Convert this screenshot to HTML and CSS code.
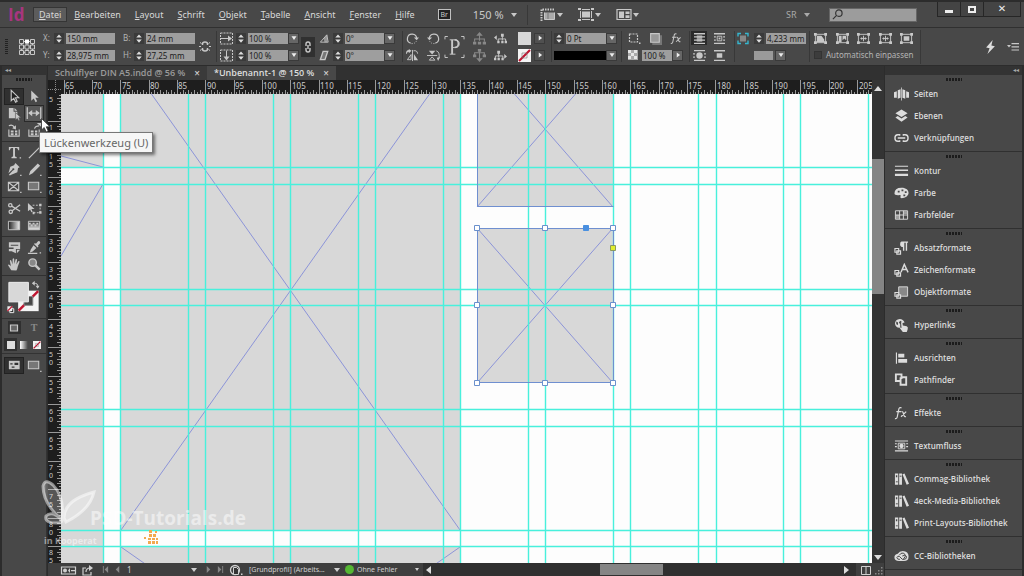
FILE: index.html
```html
<!DOCTYPE html>
<html lang="de">
<head>
<meta charset="utf-8">
<title>Unbenannt-1</title>
<link rel="stylesheet" href="styles.css">
</head>
<body>
<svg class="defs" aria-hidden="true">
  <symbol id="spin" viewBox="0 0 10 12"><path d="M2 5 5 1.5 8 5zM2 7h6L5 10.500z"/></symbol>
  <symbol id="caret" viewBox="0 0 10 12"><path d="M2 4h6L5 8.500z"/></symbol>
  <symbol id="right" viewBox="0 0 10 12"><path d="M3.500 3v6L7.500 6z"/></symbol>
  <symbol id="refpoint" viewBox="0 0 16 16"><g fill="none" stroke="currentColor"><path d="M2.500 2.500h11v11h-11zM2.500 8h11M8 2.500v11"/></g><g fill="#484848" stroke="currentColor"><path d="M.5.5h4v4h-4zM11.500.5h4v4h-4zM.5 6h4v4h-4zM6 6h4v4H6zM11.500 6h4v4h-4zM.5 11.500h4v4h-4zM6 11.500h4v4H6zM11.500 11.500h4v4h-4z"/></g><path d="M6 .5h4v4H6z" fill="#fff"/></symbol>
  <symbol id="unlink" viewBox="0 0 12 14"><g fill="none" stroke="currentColor" stroke-width="1.500"><path d="M3.500 5.500V4.500q0-2 2.500-2t2.500 2v1M3.500 8.500v1q0 2 2.500 2t2.500-2v-1"/><path stroke-width="1" d="M0 7h2M10 7h2M1 3l1.500 1M11 3 9.500 4M1 11l1.500-1M11 11l-1.500-1"/></g></symbol>
  <symbol id="link" viewBox="0 0 10 14"><g fill="none" stroke="currentColor" stroke-width="1.400"><path d="M3 6V4q0-2 2-2t2 2v2M3 8v2q0 2 2 2t2-2V8M5 5v4"/></g></symbol>
  <symbol id="scalex" viewBox="0 0 13 12"><path fill="none" stroke="currentColor" stroke-dasharray="2 1" d="M.5.5h12v11H.5z"/><path d="M1 5.500h7V3l4 3-4 3V6.500H1z"/></symbol>
  <symbol id="scaley" viewBox="0 0 13 12"><path fill="none" stroke="currentColor" stroke-dasharray="2 1" d="M.5.5h12v11H.5z"/><path d="M6 1h1v6h2.500l-3 4-3-4H6z"/></symbol>
  <symbol id="angle" viewBox="0 0 12 12"><path fill="none" stroke="currentColor" d="M10 10H1.500L8.500 2z"/><path d="M5 6l4-4v8H6z" opacity=".6"/></symbol>
  <symbol id="shear" viewBox="0 0 12 12"><path fill="#777" stroke="currentColor" stroke-width="1.500" d="M4.500 1.500h5l-3 9h-5z"/></symbol>
  <symbol id="rotcw" viewBox="0 0 14 14"><path fill="none" stroke="currentColor" stroke-width="1.300" d="M5 12A5 5 0 1 1 11.500 7"/><path fill="none" stroke="currentColor" stroke-dasharray="1 1.500" d="M6 12.500q5 0 5.500-4"/><path d="M8.500 6h5.500L11.500 9z"/></symbol>
  <symbol id="rotccw" viewBox="0 0 14 14"><path fill="none" stroke="currentColor" stroke-width="1.300" d="M9 12A5 5 0 1 0 2.500 7"/><path fill="none" stroke="currentColor" stroke-dasharray="1 1.500" d="M8 12.500q-5 0-5.500-4"/><path d="M0 6h5.500L2.500 9z"/></symbol>
  <symbol id="fliph" viewBox="0 0 14 14"><path d="M8.500 5.500 13 12H8.500zM3 0l3 2-3 2.500V3Q1 3 1 5H0q0-4 3-4z"/><path fill="none" stroke="currentColor" d="M5.500 6v5.500h-4zM7 1v12M8 2q4-1 4.500 3"/></symbol>
  <symbol id="flipv" viewBox="0 0 14 14"><path d="M2 2h7L5.500 6z"/><path fill="none" stroke="currentColor" d="M2.500 12h6L5.500 8.500zM0 7h11M10 2q4 1 3 8"/><path d="M14 9l-2 4-1.500-3.500z"/></symbol>
  <symbol id="bigp" viewBox="0 0 22 24"><path fill="none" stroke="currentColor" d="M1 4V1h3M18 1h3v3M1 20v3h3M18 23h3v-3"/><path fill="none" stroke="currentColor" stroke-width="1" d="M6 4.500h5q5 0 5 4t-5 4H9M6 19.500h6"/><path d="M7.500 4.500h2v15h-2z"/><path fill="none" stroke="currentColor" stroke-width="1.600" d="M11 4.500q4 0 4 4t-4 4"/></symbol>
  <symbol id="treeup" viewBox="0 0 12 12"><path fill="none" stroke="currentColor" d="M6 3v5M1.500 9V6.500h9V9"/><path d="M6 0l3 3.500H3zM0 9h3v2.500H0zM4.500 9h3v2.500h-3zM9 9h3v2.500H9z"/></symbol>
  <symbol id="treedown" viewBox="0 0 12 12"><path fill="none" stroke="currentColor" d="M6 2v7M1.500 5.500V3.500h9v2"/><path d="M6 12l3-3.500H3zM0 5h3v2.500H0zM9 5h3v2.500H9zM4.500 0h3v2.500h-3z"/></symbol>
  <symbol id="treeleft" viewBox="0 0 14 12"><path fill="none" stroke="currentColor" d="M9 3v5M4.500 9V6.500h8V9"/><path d="M0 5l3-2.500v5zM7.500 1h3v3h-3zM3.500 8.500h2.500V11H3.500zM7.800 8.500h2.500V11H7.800zM11.500 8.500H14V11h-2.500z"/></symbol>
  <symbol id="treeright" viewBox="0 0 14 12"><path fill="none" stroke="currentColor" d="M5 3v5M1.500 9V6.500h8V9"/><path d="M14 7l-3-2.500v5zM3.500 1h3v3h-3zM0 8.500h2.500V11H0zM3.800 8.500h2.500V11H3.800zM8 8.500h2.500V11H8z"/></symbol>
  <symbol id="none" viewBox="0 0 13 13"><path fill="#f4f4f4" d="M0 0h13v13H0z"/><path stroke="#c01530" stroke-width="2.200" d="M1 12 12 1"/><path d="M4 4h5v5H4z" fill="none" stroke="#777" stroke-width=".6"/></symbol>
  <symbol id="dashbox" viewBox="0 0 13 12"><path fill="none" stroke="currentColor" stroke-width="1.200" stroke-dasharray="2 1" d="M1.500 1.500h8v8h-8z"/><path d="M11 10h1.500v1.500H11z"/></symbol>
  <symbol id="shadowbox" viewBox="0 0 12 12"><path d="M3 3h9v9H3z" fill="#777"/><path fill="#999" stroke="currentColor" d="M1.500 1.500h8v8h-8z"/></symbol>
  <symbol id="fx" viewBox="0 0 16 14"><g fill="none" stroke="currentColor" stroke-width="1.300"><path d="M8 1.500q-2.500-1-3 2L3.500 11Q3 13.500 1 13M2.500 5.500h5M8 5.500q1.500-.5 2 2l.7 2q.5 2 2 1.200M13 5.500 7.500 11"/></g></symbol>
  <symbol id="checker" viewBox="0 0 10 10"><path fill="#aaa" d="M0 0h10v10H0z"/><path fill="#e6e6e6" d="M0 0h3v3H0zM6 0h3v3H6zM3 3h3v3H3zM0 6h3v3H0zM6 6h3v3H6z"/></symbol>
  <symbol id="wrapno" viewBox="0 0 14 12"><path d="M1 0h12v1.500H1zM1 3.500h12V5H1zM1 7h12v1.500H1zM1 10.500h12V12H1z"/><path d="M4 2.500h6v7H4z" opacity=".7"/></symbol>
  <symbol id="wrapbox" viewBox="0 0 14 12"><path d="M1 0h12v1.500H1zM1 3.500h2V5H1zM11 3.500h2V5h-2zM1 7h2v1.500H1zM11 7h2v1.500h-2zM1 10.500h12V12H1z"/><path fill="none" stroke="currentColor" d="M4.500 3.500h5v5h-5z"/><path d="M6 5h2v2H6z"/></symbol>
  <symbol id="wrapshape" viewBox="0 0 14 12"><path d="M1 0h12v1.300H1zM0 3.500h2V5H0zM12 3.500h2V5h-2zM0 7h2v1.500H0zM12 7h2v1.500h-2zM1 10.700h12V12H1z"/><circle cx="7" cy="6" r="3.500"/></symbol>
  <symbol id="wrapjump" viewBox="0 0 14 12"><path d="M1 0h12v1.500H1zM1 10.500h12V12H1zM4 3.500h6v5H4z"/></symbol>
  <symbol id="corner" viewBox="0 0 12 12"><path fill="#888" d="M3 3h6v6H3z"/><g fill="none" stroke="#35b6cf" stroke-width="1.400"><path d="M1 4V1h3M8 1h3v3M1 8v3h3M8 11h3V8"/></g></symbol>
  <symbol id="fit" viewBox="0 0 14 12"><path fill="none" stroke="currentColor" d="M1.500 1.500h11v9h-11z"/><path d="M0 0h3v3H0zM11 0h3v3h-3zM0 9h3v3H0zM11 9h3v3h-3zM4 3.500h6v5H4z"/></symbol>
  <symbol id="fitarrow" viewBox="0 0 14 12"><path fill="none" stroke="currentColor" d="M1.500 1.500h11v9h-11zM7 3v6M4 6h6"/><path d="M0 0h3v3H0zM11 0h3v3h-3zM0 9h3v3H0zM11 9h3v3h-3zM3.500 6l2-1.500v3zM10.500 6l-2-1.500v3z"/></symbol>
  <symbol id="fill" viewBox="0 0 14 12"><path fill="none" stroke="currentColor" d="M1.500 1.500h11v9h-11z"/><path d="M0 0h3v3H0zM11 0h3v3h-3zM0 9h3v3H0zM11 9h3v3h-3zM3 3h5l3 4v3H3z"/></symbol>
  <symbol id="fillframe" viewBox="0 0 14 12"><path fill="none" stroke="currentColor" d="M1.500 1.500h11v9h-11z"/><path d="M0 0h3v3H0zM11 0h3v3h-3zM0 9h3v3H0zM11 9h3v3h-3zM3 3h3v7H3zM7 3h4v5L9 6 7 8z"/></symbol>
  <symbol id="bolt" viewBox="0 0 12 16"><path d="M8.500 0 1 8.500l4 .8L2.500 16 11 7l-4-.8z"/></symbol>
  <symbol id="flyout" viewBox="0 0 12 10"><path d="M0 3h4L2 5.500zM4.500 1H12v1.200H4.500zM4.500 4.200H12v1.200H4.500zM4.500 7.400H12v1.200H4.500z"/></symbol>
  <symbol id="viewopt" viewBox="0 0 16 13"><path fill="none" stroke="currentColor" stroke-dasharray="1.500 1" stroke-width="2" d="M1.500 13V1.500H15"/><path fill="#aaa" stroke="currentColor" d="M4.500 4.500h10v7h-10z"/><path fill="none" stroke="#777" d="M4.500 4.500h10M8 5v6"/></symbol>
  <symbol id="screen" viewBox="0 0 16 13"><path d="M4 3.500h8v6H4z"/><path fill="none" stroke="currentColor" d="M2.500 3v7M13.500 3v7M4 1.500h8M4 11.500h8"/><path d="M0 0h3v2H0zM13 0h3v2h-3zM0 11h3v2H0zM13 11h3v2h-3z"/></symbol>
  <symbol id="arrange" viewBox="0 0 16 13"><path fill="none" stroke="currentColor" stroke-width="1.200" d="M1 1.500h14v10H1z"/><path d="M3 3.500h5v6.500H3zM9.500 3.500h4v2.600h-4zM9.500 7.300h4V10h-4z"/></symbol>
  <symbol id="lens" viewBox="0 0 12 12"><g fill="none" stroke="#333" stroke-width="1.300"><circle cx="7.500" cy="4.500" r="3.500"/><path d="M5 7 1 11"/></g></symbol>

  <symbol id="t-select" viewBox="0 0 16 16"><path fill="#222" stroke="currentColor" stroke-width="1.200" d="M4.500 1.500v11l2.700-2.500 2 4 1.600-.9-1.900-3.800h3.600z"/></symbol>
  <symbol id="t-direct" viewBox="0 0 16 16"><path d="M4.500 1.500v11l2.700-2.500 2 4 1.600-.9-1.900-3.800h3.600z"/></symbol>
  <symbol id="t-page" viewBox="0 0 16 16"><path d="M2 2h5v4h4v7H2zM8 2l3 3H8z"/><path stroke="#484848" stroke-width=".6" d="M9 7v8l2-1.800 1.500 2.500 1.200-.8-1.200-2.500H15z"/></symbol>
  <symbol id="t-gap" viewBox="0 0 20 16"><path fill="none" stroke="currentColor" stroke-width="1.400" d="M2.500 1v13M17.500 1v13M5 7.500h10"/><path d="M3.500 7.500 8 4v7zM16.500 7.500 12 4v7z"/></symbol>
  <symbol id="t-collect" viewBox="0 0 16 16"><path fill="none" stroke="currentColor" stroke-width="1.200" d="M2 7v7h11V7M2 3q4-2 6 2"/><path d="M9.500 2.500V7L5.500 5.500zM4 8h3v2H4zM8.500 8H11v2H8.500zM4 11h3v2H4zM8.500 11H11v2H8.500z"/></symbol>
  <symbol id="t-place" viewBox="0 0 16 16"><path fill="none" stroke="currentColor" stroke-width="1.200" d="M2 7v7h11V7M8 6q1-3 5-3"/><path d="M10.500 0H15v4zM4 8h3v2H4zM8.500 8H11v2H8.500zM4 11h3v2H4zM8.500 11H11v2H8.500z"/></symbol>
  <symbol id="t-type" viewBox="0 0 16 16"><path d="M2 2h11v3.500h-1Q11.500 3.500 10 3.300H8.500v8.400q0 1 1.800 1V14H4.800v-1.300q1.700 0 1.700-1V3.300H5Q3.500 3.500 3 5.500H2zM13.500 13H15v1.500h-1.500z"/></symbol>
  <symbol id="t-line" viewBox="0 0 16 16"><path stroke="currentColor" stroke-width="1.300" d="M2 14 14 2"/></symbol>
  <symbol id="t-pen" viewBox="0 0 16 16"><path d="M9 1l4.500 4.500-1.700 1-.8 4.500L4.500 13.500 3 14.500 2 13.500l4.500-4.700a1.100 1.100 0 1 0-.8-.8L1.500 12l2-7 4-1.500zM14 13.500h1.500V15H14z"/></symbol>
  <symbol id="t-pencil" viewBox="0 0 16 16"><path d="M11.500 1.500l2.500 2.500-8 8L2 14l1.500-4.500zM14 13.500h1.500V15H14z"/></symbol>
  <symbol id="t-frame" viewBox="0 0 16 16"><path fill="none" stroke="currentColor" stroke-width="1.200" d="M1.500 3.500h11v9h-11zM1.500 3.500l11 9M12.500 3.500l-11 9"/><path d="M14 13.500h1.500V15H14z"/></symbol>
  <symbol id="t-rect" viewBox="0 0 16 16"><path fill="#777" stroke="currentColor" stroke-width="1.200" d="M1.500 3.500h11v8h-11z"/><path d="M14 13.500h1.500V15H14z"/></symbol>
  <symbol id="t-cut" viewBox="0 0 16 16"><g fill="none" stroke="currentColor" stroke-width="1.400"><circle cx="3.500" cy="4.500" r="1.800"/><circle cx="4" cy="11.500" r="1.800"/><path d="M5 5.500 14 11M5.500 10.500 14 4"/></g></symbol>
  <symbol id="t-trans" viewBox="0 0 16 16"><path d="M1 2v9l2.300-2 1.400 3 1.300-.6L4.700 8.500H8z"/><path fill="none" stroke="currentColor" stroke-dasharray="2 1.500" d="M6 4.500h8v8H7"/><path d="M13 3h2.500v2.500H13zM13 11h2.500v2.500H13zM6 11.500h2V14H6z"/></symbol>
  <linearGradient id="lg"><stop offset="0" stop-color="#222"/><stop offset="1" stop-color="#eee"/></linearGradient>
  <symbol id="t-grad" viewBox="0 0 16 16"><path fill="url(#lg)" stroke="currentColor" d="M1.500 3.500h12v9h-12z"/></symbol>
  <linearGradient id="lv" x2="0" y2="1"><stop offset="0" stop-color="#333"/><stop offset="1" stop-color="#eee"/></linearGradient>
  <symbol id="t-feather" viewBox="0 0 16 16"><path fill="url(#lv)" stroke="currentColor" d="M1.500 3.500h12v9h-12z"/><path d="M2 5h2v2H2zM6 5h2v2H6zM10 5h2v2h-2zM4 7h2v2H4zM8 7h2v2H8z"/></symbol>
  <symbol id="t-note" viewBox="0 0 16 16"><path fill-rule="evenodd" d="M2 2.500h12v7H9.500V14L5 12H2V9.500h5V8H2zM4 5v1.200h8V5z"/><path d="M10.500 10.500H14l-3.500 3.500z"/></symbol>
  <symbol id="t-drop" viewBox="0 0 16 16"><path d="M12 1q2.500 0 2 2.500L11.500 6l.8 1-1 1L7.500 4.200l1-1 1 .8zM7 5.500 10 8.500l-4 3.700-3 1 1-3zM1 13.500h10V15H1zM13.500 13H15v1.500h-1.500z"/></symbol>
  <symbol id="t-hand" viewBox="0 0 16 16"><path d="M4.500 14Q2.500 11 1 8.500q.5-1.200 2 0l1.200 1.300L3 4q.8-1.500 1.700 0l1.100 4L6 2q1-1.200 1.700 0l.2 5.500L9.200 2.500q1-1 1.600.2L10 8l2-3.500q1.200-.6 1.400.6L11.500 10q-.5 3-1.500 4.500z"/></symbol>
  <symbol id="t-zoom" viewBox="0 0 16 16"><circle cx="6" cy="6" r="4" fill="#888" stroke="currentColor" stroke-width="1.500"/><path stroke="currentColor" stroke-width="2.600" d="m9 9 4.500 4.500"/></symbol>
  <symbol id="t-box" viewBox="0 0 12 12"><path fill="#666" stroke="currentColor" stroke-width="1.200" d="M2.500 3h7v6h-7z"/></symbol>
  <symbol id="t-mode" viewBox="0 0 16 16"><path d="M2 3h11.500v9H2z"/><path fill="#333" d="M3.500 5.500H6V7H3.500zM8 5h4v2.500H8zM5 9h3v1.500H5z"/></symbol>
  <symbol id="t-swap" viewBox="0 0 8 8"><path fill="none" stroke="currentColor" d="M2 2.500h1.500Q6 2.500 6 5v1"/><path d="M0 2.500 3 0v5zM3.800 5H8L6 8z"/></symbol>

  <symbol id="p-pages" viewBox="0 0 16 14"><path d="M0 5l3-1v7H0zM4 3l3-1v9l-3 1zM9 2l3 1v9l-3-1zM13 4l3 1v6h-3z"/><path d="M7.600 0h.8v14h-.8z"/></symbol>
  <symbol id="p-layers" viewBox="0 0 16 14"><path d="M8 0l6.500 4L8 8 1.500 4zM1.500 8.500 4 7l4 2.700L12 7l2.500 1.500L8 13z"/></symbol>
  <symbol id="p-links" viewBox="0 0 16 14"><g fill="none" stroke="currentColor" stroke-width="1.500"><path d="M6 4.500V3.500H4q-3 0-3 3.500t3 3.500h2v-1M10 4.500V3.500h2q3 0 3 3.500t-3 3.500h-2v-1M4 7h8"/></g></symbol>
  <symbol id="p-stroke" viewBox="0 0 16 14"><path d="M1 1.500h14v1H1zM1 5.500h14V7H1zM1 10h14v2.300H1z"/></symbol>
  <symbol id="p-color" viewBox="0 0 16 14"><path fill-rule="evenodd" d="M8 1.500c5 0 7.500 2.500 7.500 5.500S12 12.500 8 12.500q-2-.3-1-2t-2-1.200Q.5 9.500.5 7.500.500 1.500 8 1.500zM4 4.500v2h2v-2zM8 3.200v2h2v-2zM11.500 5v2h2V5zM10 8.500v2h2v-2z"/></symbol>
  <symbol id="p-swatch" viewBox="0 0 16 14"><path fill="none" stroke="currentColor" d="M1.500 2.500h13v9h-13zM1.500 7h13M6 2.500v9M10 2.500v9"/><path d="M10 3h4v3h-4zM2 7h4v4H2z" opacity=".6"/></symbol>
  <symbol id="p-para" viewBox="0 0 16 14"><path d="M8 0h7v1.500h-1V10h-1.500V1.500H11V10H9.500V6Q6.500 6 6.500 3T8 0z"/><path fill="none" stroke="currentColor" stroke-width="1.200" d="M1 7.500h4v4H1zM3 10h4v3.500H3z"/></symbol>
  <symbol id="p-char" viewBox="0 0 16 14"><path fill="none" stroke="currentColor" stroke-width="1.500" d="M7.500 9.500 11 1l4 8.500M9 6.500h4.500"/><path fill="none" stroke="currentColor" stroke-width="1.200" d="M1 7.500h4v4H1zM3 10h4v3.500H3z"/></symbol>
  <symbol id="p-obj" viewBox="0 0 16 14"><path fill="#888" stroke="currentColor" d="M5 1.500h9.500v10H5z"/><path fill="#555" stroke="currentColor" stroke-width="1.200" d="M1 7.500h4v4H1zM3 10h4v3.500H3z"/></symbol>
  <symbol id="p-hyper" viewBox="0 0 16 16"><path fill-rule="evenodd" d="M6 1q4 0 5.500 4L8.500 6V4.500L6.500 3 5 5l1.500 2v4Q1 11.500.5 6 1 1.500 6 1zM2 4v3l2 1V5z"/><path d="M7.500 5q1-1 1.500 0l.5 3.500 4.500 1q2 1 1 3.500l-1 3H9.500L6 11.500q.5-1.300 2 0z"/></symbol>
  <symbol id="p-align" viewBox="0 0 16 14"><path d="M2 1h1.200v12H2zM4.500 2.500H11v4H4.500zM4.500 8H14v4H4.500z"/></symbol>
  <symbol id="p-path" viewBox="0 0 16 14"><path fill-rule="evenodd" d="M1 0h8v3h5v10H6V9H1zM3 2v5h3V4h1V2zM8 6v5h4V5H9v1z"/></symbol>
  <symbol id="p-wrap" viewBox="0 0 16 14"><path d="M1 1h14v1.300H1zM1 4h2v1.200H1zM13 4h2v1.200h-2zM1 7h2v1.200H1zM13 7h2v1.200h-2zM1 11.500h14v1.300H1z"/><path fill="none" stroke="currentColor" d="M4.500 4h7v6h-7z"/><circle cx="8" cy="7" r="2.300"/></symbol>
  <symbol id="p-lib" viewBox="0 0 16 14"><path fill-rule="evenodd" d="M1 1h3.500v12H1zM2 3v2h1.500V3zM5.500 1h3v12h-3zM9 2l2.200-1L16 12l-2.500 1z"/><path stroke="#484848" d="M6 4h2M2 10h2"/></symbol>
  <symbol id="p-cc" viewBox="0 0 18 14"><path d="M6 13Q.5 13 .5 8.500.500 5 4.500 4.200 6.500 1 10.500 1 17.500 1.500 17.500 7.500q0 5.500-5.500 5.500z"/><g fill="none" stroke="#484848" stroke-width="1.200"><path d="M9 10 6.500 7.500q-2-1-3 1.200.3 2.300 2.500 2.300h1M6.500 6Q8 3 11 3.500q3 1 2.500 4l-2 3"/><path d="M10 7q3-2 5 .5.500 3.500-3 3.500h-2L7.500 8.500"/></g></symbol>
</svg>

<div class="app">
  <header class="menubar">
    <span class="logo">Id</span>
    <nav class="menus">
      <button class="menu open"><u>D</u>atei</button><button class="menu"><u>B</u>earbeiten</button><button class="menu"><u>L</u>ayout</button><button class="menu"><u>S</u>chrift</button><button class="menu"><u>O</u>bjekt</button><button class="menu"><u>T</u>abelle</button><button class="menu"><u>A</u>nsicht</button><button class="menu"><u>F</u>enster</button><button class="menu"><u>H</u>ilfe</button>
    </nav>
    <button class="bridge">Br</button>
    <span class="pick zoom"><select aria-label="Zoomstufe"><option>150 %</option></select></span>
    <span class="bar-sep"></span>
    <button class="view" aria-label="Anzeigeoptionen"><svg><use href="#viewopt"/></svg></button>
    <button class="view" aria-label="Bildschirmmodus"><svg><use href="#screen"/></svg></button>
    <button class="view" aria-label="Dokumente anordnen"><svg><use href="#arrange"/></svg></button>
    <span class="pick workspace"><select aria-label="Arbeitsbereich"><option>SR</option></select></span>
    <label class="search"><svg><use href="#lens"/></svg><input type="search" aria-label="Suche"></label>
    <div class="window-buttons">
      <button aria-label="Minimieren"><i class="min"></i></button><button aria-label="Maximieren"><i class="max"></i></button><button class="close" aria-label="Schließen">✕</button>
    </div>
  </header>

  <section class="control">
    <span class="vgrip"></span>
    <svg class="ref"><use href="#refpoint"/></svg>
    <div class="group xy">
      <div class="row"><label for="fx-x">X:</label><svg class="sp"><use href="#spin"/></svg><input id="fx-x" value="150 mm"></div>
      <div class="row"><label for="fx-y">Y:</label><svg class="sp"><use href="#spin"/></svg><input id="fx-y" value="28,975 mm"></div>
    </div>
    <div class="group bh">
      <div class="row"><label for="fx-b">B:</label><svg class="sp"><use href="#spin"/></svg><input id="fx-b" value="24 mm"></div>
      <div class="row"><label for="fx-h">H:</label><svg class="sp"><use href="#spin"/></svg><input id="fx-h" value="27,25 mm"></div>
    </div>
    <button class="chain" aria-label="Proportionen"><svg><use href="#unlink"/></svg></button>
    <div class="group scale sep">
      <div class="row"><svg class="ic"><use href="#scalex"/></svg><svg class="sp"><use href="#spin"/></svg><input aria-label="Skalierung X" value="100 %"><button class="dd" aria-label="Auswahl"><svg><use href="#caret"/></svg></button></div>
      <div class="row"><svg class="ic"><use href="#scaley"/></svg><svg class="sp"><use href="#spin"/></svg><input aria-label="Skalierung Y" value="100 %"><button class="dd" aria-label="Auswahl"><svg><use href="#caret"/></svg></button></div>
    </div>
    <button class="lock" aria-label="Proportionen beibehalten"><svg><use href="#link"/></svg></button>
    <div class="group angle">
      <div class="row"><svg class="ic"><use href="#angle"/></svg><svg class="sp"><use href="#spin"/></svg><input aria-label="Drehwinkel" value="0°"><button class="dd" aria-label="Auswahl"><svg><use href="#caret"/></svg></button></div>
      <div class="row"><svg class="ic"><use href="#shear"/></svg><svg class="sp"><use href="#spin"/></svg><input aria-label="Scherwinkel" value="0°"><button class="dd" aria-label="Auswahl"><svg><use href="#caret"/></svg></button></div>
    </div>
    <div class="group rotate sep">
      <div class="row wide"><svg class="ic"><use href="#rotcw"/></svg><svg class="ic"><use href="#rotccw"/></svg></div>
      <div class="row wide"><svg class="ic"><use href="#fliph"/></svg><svg class="ic"><use href="#flipv"/></svg></div>
    </div>
    <svg class="bigp"><use href="#bigp"/></svg>
    <div class="group tree">
      <div class="row wide"><svg class="ic dim"><use href="#treeup"/></svg><svg class="ic"><use href="#treeleft"/></svg></div>
      <div class="row wide"><svg class="ic dim"><use href="#treedown"/></svg><svg class="ic"><use href="#treeright"/></svg></div>
    </div>
    <div class="group paint">
      <div class="row"><span class="chip"></span><button class="dd flat" aria-label="Fläche"><svg><use href="#right"/></svg></button></div>
      <div class="row"><svg class="chip"><use href="#none"/></svg><button class="dd flat" aria-label="Kontur"><svg><use href="#right"/></svg></button></div>
    </div>
    <div class="group stroke sep">
      <div class="row"><svg class="sp"><use href="#spin"/></svg><input aria-label="Konturstärke" value="0 Pt"><button class="dd" aria-label="Auswahl"><svg><use href="#caret"/></svg></button></div>
      <div class="row"><span class="line-style"></span><button class="dd" aria-label="Konturart"><svg><use href="#caret"/></svg></button></div>
    </div>
    <div class="group effects sep">
      <div class="row wide"><svg class="ic"><use href="#dashbox"/></svg><svg class="ic"><use href="#shadowbox"/></svg><svg class="ic"><use href="#fx"/></svg></div>
      <div class="row"><svg class="ic small"><use href="#checker"/></svg><input aria-label="Deckkraft" value="100 %"><button class="dd" aria-label="Auswahl"><svg><use href="#right"/></svg></button></div>
    </div>
    <div class="group wrap sep">
      <div class="row wide"><button class="tog on" aria-label="Kein Umfluss"><svg><use href="#wrapno"/></svg></button><button class="tog" aria-label="Rahmenumfluss"><svg><use href="#wrapbox"/></svg></button></div>
      <div class="row wide"><button class="tog" aria-label="Formumfluss"><svg><use href="#wrapshape"/></svg></button><button class="tog" aria-label="Überspringen"><svg><use href="#wrapjump"/></svg></button></div>
    </div>
    <div class="group corners sep">
      <div class="row"><svg class="ic"><use href="#corner"/></svg><svg class="sp"><use href="#spin"/></svg><input aria-label="Eckenradius" value="4,233 mm"></div>
      <div class="row end"><span class="corner-style"></span><button class="dd" aria-label="Eckenform"><svg><use href="#caret"/></svg></button></div>
    </div>
    <div class="group fitting sep">
      <div class="row wide"><svg class="ic"><use href="#fill"/></svg><svg class="ic"><use href="#fillframe"/></svg><svg class="ic"><use href="#fitarrow"/></svg><svg class="ic"><use href="#fitarrow"/></svg><svg class="ic"><use href="#fit"/></svg></div>
      <div class="row"><label class="auto"><input type="checkbox">Automatisch einpassen</label></div>
    </div>
    <span class="bar-sep tall"></span>
    <button class="bolt" aria-label="GPU"><svg><use href="#bolt"/></svg></button>
    <button class="fly" aria-label="Bedienfeldmenü"><svg><use href="#flyout"/></svg></button>
  </section>

  <main class="work">
    <aside class="tools">
      <div class="collapse">◂◂</div>
      <div class="grip"></div>
      <div class="toolset">
        <button class="on" aria-label="Auswahl"><svg><use href="#t-select"/></svg></button><button aria-label="Direktauswahl"><svg><use href="#t-direct"/></svg></button>
        <button aria-label="Seite"><svg><use href="#t-page"/></svg></button><button class="hover" aria-label="Lücke"><svg><use href="#t-gap"/></svg></button>
        <button aria-label="Inhaltsaufnahme"><svg><use href="#t-collect"/></svg></button><button aria-label="Inhaltsplatzierung"><svg><use href="#t-place"/></svg></button>
      </div>
      <div class="toolset">
        <button aria-label="Text"><svg><use href="#t-type"/></svg></button><button aria-label="Linie"><svg><use href="#t-line"/></svg></button>
        <button aria-label="Zeichenstift"><svg><use href="#t-pen"/></svg></button><button aria-label="Buntstift"><svg><use href="#t-pencil"/></svg></button>
        <button aria-label="Rechteckrahmen"><svg><use href="#t-frame"/></svg></button><button aria-label="Rechteck"><svg><use href="#t-rect"/></svg></button>
      </div>
      <div class="toolset">
        <button aria-label="Schere"><svg><use href="#t-cut"/></svg></button><button aria-label="Frei transformieren"><svg><use href="#t-trans"/></svg></button>
        <button aria-label="Verlauf"><svg><use href="#t-grad"/></svg></button><button aria-label="Weiche Verlaufskante"><svg><use href="#t-feather"/></svg></button>
      </div>
      <div class="toolset">
        <button aria-label="Notiz"><svg><use href="#t-note"/></svg></button><button aria-label="Pipette"><svg><use href="#t-drop"/></svg></button>
        <button aria-label="Hand"><svg><use href="#t-hand"/></svg></button><button aria-label="Zoom"><svg><use href="#t-zoom"/></svg></button>
      </div>
      <svg class="fillstroke" viewBox="0 0 44 43">
        <path fill="#f4f4f4" d="M16 15h21v21H16z"/><path stroke="#c01530" stroke-width="2.500" d="M16.500 35.500 36.500 15.500"/><path fill="#484848" stroke="#888" d="M22 21h9v9h-9z"/>
        <path fill="#d8d8d8" stroke="#efefef" d="M6.500 6.500h20v20h-20z"/>
        <use href="#t-swap" x="30" y="5" width="8" height="8"/>
        <path fill="#222" stroke="#eee" d="M7.500 33.500h4v4h-4z"/><path fill="#eee" d="M5 31h5v5H5z"/><path stroke="#c01530" stroke-width="1.200" d="m5 36 5-5"/>
      </svg>
      <div class="applies two"><button class="on" aria-label="Container"><svg><use href="#t-box"/></svg></button><button class="dim">T</button></div>
      <div class="applies three"><button class="on" aria-label="Farbe"><i class="solid"></i></button><button aria-label="Verlauf"><i class="grad"></i></button><button aria-label="Keine"><svg><use href="#none"/></svg></button></div>
      <div class="toolset modes"><button class="on" aria-label="Normal"><svg><use href="#t-mode"/></svg></button><button aria-label="Vorschau"><svg><use href="#t-rect"/></svg></button></div>
    </aside>

    <section class="document">
      <div class="tabs">
        <button class="tab">Schulflyer DIN A5.indd @ 56 %<span>×</span></button><button class="tab active">*Unbenannt-1 @ 150 %<span>×</span></button>
      </div>
      <div class="sheet">
        <svg class="origin"><path d="M0 9.500h13M7.500 0v14" stroke="#888" stroke-dasharray="1 1"/></svg>
        <svg class="ruler-x" id="ruler-x"></svg>
        <svg class="ruler-y" id="ruler-y"></svg>
        <svg class="canvas">
          <g transform="translate(-61 -94)">
            <g fill="#d8d8d8">
              <path d="M61 94h42v73H61zM61 184h42v420H61zM121 94h339v436H121zM121 547h339v60H121zM477 94h136v113H477zM477 228h136v155H477z"/>
            </g>
            <g fill="none" stroke="#8c94d8">
              <path d="M61 156l42 11M103 184 61 256M121 51l339 479M460 51 121 530M121 547l90 63M460 547l-90 63M477 51l136 156M613 51 477 207M477 228l136 155M613 228 477 383"/>
            </g>
            <g class="guides" id="guides"></g>
            <path fill="none" stroke="#6f8fd0" d="M477.500 90v116.500h136M613.500 228.500h-136v154h136z"/>
            <g fill="#fff" stroke="#6a90cc">
              <path d="M474.500 225.500h5v5h-5zM542.500 225.500h5v5h-5zM610.500 225.500h5v5h-5zM474.500 302.500h5v5h-5zM610.500 302.500h5v5h-5zM474.500 380.500h5v5h-5zM542.500 380.500h5v5h-5zM610.500 380.500h5v5h-5z"/>
              <path fill="#4a90e0" stroke="#4a90e0" d="M583.500 225.500h5v5h-5z"/>
              <path fill="#e0ee30" stroke="#8a9a60" d="M610.500 245.500h5v5h-5z"/>
            </g>
          </g>
        </svg>
      </div>
      <footer class="status">
        <svg class="st-a" viewBox="0 0 36 12"><path fill="none" stroke="currentColor" stroke-width="1.200" d="M1.500 3h14v7h-14z"/><circle cx="5" cy="6.500" r="2"/><path d="M10 4v5l-2-2.500zM11 6h4v1.200h-4z"/><path fill="none" stroke="currentColor" stroke-width="1.200" d="M26 4h-3v7h8V8M26 8q0-4 4-4"/><path d="m29 1 4 3-4 3z"/></svg>
        <button class="nav dim" aria-label="Erste Seite"><svg viewBox="0 0 8 8"><path d="M1 0h1v8H1zM7 0v8L3 4z"/></svg></button>
        <button class="nav dim" aria-label="Vorherige Seite"><svg viewBox="0 0 8 8"><path d="M6 0v8L2 4z"/></svg></button>
        <span class="pick page"><select aria-label="Seite"><option>1</option></select></span>
        <button class="nav dim" aria-label="Nächste Seite"><svg viewBox="0 0 8 8"><path d="M2 0v8l4-4z"/></svg></button>
        <button class="nav dim" aria-label="Letzte Seite"><svg viewBox="0 0 8 8"><path d="M6 0h1v8H6zM1 0v8l4-4z"/></svg></button>
        <svg class="preflight" viewBox="0 0 14 12"><circle cx="6" cy="6" r="4.500" fill="none" stroke="currentColor" stroke-width="1.300"/><path fill="#333" stroke="currentColor" d="M4.500 3.500h3l2 2v5h-5z"/><path d="M12 9.500h1.500V11H12z"/></svg>
        <span class="pick profile"><select aria-label="Profil"><option>[Grundprofil] (Arbeits...</option></select></span>
        <i class="ok"></i>
        <span class="pick errors"><select aria-label="Preflight"><option>Ohne Fehler</option></select></span>
        <div class="hscroll"><b class="l"></b><div class="thumb"></div><b class="r"></b></div>
        <svg class="split" viewBox="0 0 24 12"><path fill="none" stroke="currentColor" d="M1.500 2.500h9v8h-9zM6 2v9"/><path fill="#888" d="M21 3h1.500v1.500H21zM18 6h1.500v1.500H18zM21 6h1.500v1.500H21zM15 9h1.500v1.500H15zM18 9h1.500v1.500H18zM21 9h1.500v1.500H21z"/></svg>
      </footer>
      <div class="vscroll"><b class="u"></b><div class="thumb"></div><b class="d"></b></div>
      <div class="watermark">
        <svg class="butterfly" viewBox="0 0 58 50"><g fill="#fff" fill-opacity=".25" stroke="#fff" stroke-opacity=".5" stroke-width="3"><path d="M22 42Q3 26 3 8 5 0 13 7q12 12 9 35zM24 40q0-18 30-26-4 18-28 30zM22 42Q12 32 6 38q-2 8 14 7z"/></g></svg>
        <strong>PSD-Tutorials.de</strong>
        <span>in Kooperat</span>
        <svg class="dots" viewBox="0 0 14 14"><path fill="#f2a950" d="M5 0h3v3H5zM11 1h2v2h-2zM5 4h3v3H5zM9 4h3v3H9zM0 7h2v2H0zM4 8h3v2H4zM8 8h3v2H8zM12 8h2v2h-2zM4 11h3v3H4zM8 11h3v3H8zM12 11h2v3h-2z"/></svg>
      </div>
    </section>

    <aside class="panels">
      <div class="collapse">◂◂</div>
      <div class="dock">
        <section><div class="grip"></div><button><svg><use href="#p-pages"/></svg>Seiten</button><button><svg><use href="#p-layers"/></svg>Ebenen</button><button><svg><use href="#p-links"/></svg>Verknüpfungen</button></section>
        <section><div class="grip"></div><button><svg><use href="#p-stroke"/></svg>Kontur</button><button><svg><use href="#p-color"/></svg>Farbe</button><button><svg><use href="#p-swatch"/></svg>Farbfelder</button></section>
        <section><div class="grip"></div><button><svg><use href="#p-para"/></svg>Absatzformate</button><button><svg><use href="#p-char"/></svg>Zeichenformate</button><button><svg><use href="#p-obj"/></svg>Objektformate</button></section>
        <section><div class="grip"></div><button><svg><use href="#p-hyper"/></svg>Hyperlinks</button></section>
        <section><div class="grip"></div><button><svg><use href="#p-align"/></svg>Ausrichten</button><button><svg><use href="#p-path"/></svg>Pathfinder</button></section>
        <section><div class="grip"></div><button><svg><use href="#fx"/></svg>Effekte</button></section>
        <section><div class="grip"></div><button><svg><use href="#p-wrap"/></svg>Textumfluss</button></section>
        <section><div class="grip"></div><button><svg><use href="#p-lib"/></svg>Commag-Bibliothek</button><button><svg><use href="#p-lib"/></svg>4eck-Media-Bibliothek</button><button><svg><use href="#p-lib"/></svg>Print-Layouts-Bibliothek</button></section>
        <section><div class="grip"></div><button><svg><use href="#p-cc"/></svg>CC-Bibliotheken</button></section>
      </div>
    </aside>
  </main>
  <div class="tooltip" role="tooltip">Lückenwerkzeug (U)</div>
  <svg class="cursor" viewBox="0 0 10 15"><path fill="#fff" stroke="#333" stroke-width=".8" d="M.5.5v11.500l2.700-2.500 2 4.500 2-1-2-4.200h3.800z"/></svg>
</div>
<script src="rulers.js"></script>
</body>
</html>
```
FILE: styles.css
```css
* { box-sizing: border-box; }
body {
  margin: 0;
  background: #2c2c2c;
  color: #c8c8c8;
  font: 8px/12px "Noto Sans", "Open Sans", sans-serif;
  overflow: hidden;
}
button, input, select { font: inherit; color: inherit; margin: 0; padding: 0; border: 0; background: none; border-radius: 0; }
button { display: flex; align-items: center; justify-content: center; }
select { appearance: none; }
svg { fill: currentColor; flex: none; display: block; }
.defs { position: absolute; width: 0; height: 0; }
.app { display: flex; flex-direction: column; height: 100vh; position: relative; }
.dim { opacity: .5; }

/* menu bar */
.menubar { display: flex; align-items: center; height: 28px; flex: none; background: #484848; border-top: 2px solid #2c2c2c; border-bottom: 1px solid #303030; padding: 0 3px 0 8px; }
.logo { width: 25px; color: #a8357f; font: bold 17px/20px "Open Sans", sans-serif; }
.menus { display: flex; }
.menu { height: 15px; padding: 0 6px; border: 1px solid transparent; font-size: 9px; color: #d8d8d8; white-space: nowrap; display: block; line-height: 13px; }
.menu.open { padding: 0 5px; background: #5c5c5c; border-color: #353535; }
.bridge { width: 13px; height: 11px; margin-left: 16px; border: 1px solid #c0c0c0; background: #222; font-size: 7px; line-height: 8px; }
.pick { display: flex; align-items: center; }
.pick::after { content: ""; border: 3px solid transparent; border-top: 4px solid currentColor; border-bottom: 0; }
.zoom { margin-left: 22px; width: 44px; justify-content: space-between; font-size: 11px; }
.bar-sep { width: 1px; height: 20px; background: #383838; margin: 0 12px 0 10px; }
.bar-sep.tall { height: 34px; margin: 0; }
.view { gap: 1px; margin-right: 15px; }
.view svg { width: 16px; height: 13px; }
.view::after { content: ""; border: 3px solid transparent; border-top: 4px solid currentColor; border-bottom: 0; }
.workspace { margin-left: auto; width: 24px; justify-content: space-between; font-size: 9px; color: #aaa; }
.search { display: flex; align-items: center; width: 88px; height: 14px; margin: 0 20px 0 19px; padding-left: 2px; background: #9c9c9c; border: 1px solid #666; }
.search svg { width: 11px; height: 11px; }
.search input { width: 100%; min-width: 0; outline: 0; }
.window-buttons { display: flex; align-self: flex-start; border: 1px solid #262626; border-top: 0; background: #444; }
.window-buttons button { width: 23px; height: 14px; border-right: 1px solid #262626; color: #eee; }
.window-buttons .close { width: 36px; border: 0; font: bold 10px/10px "DejaVu Sans", sans-serif; }
.min { width: 8px; height: 3px; background: #eee; margin-top: 4px; }
.max { width: 8px; height: 7px; border: 2px solid #eee; }

/* control bar */
.control { display: flex; align-items: center; height: 38px; flex: none; background: #484848; border-bottom: 1px solid #2c2c2c; padding: 0 5px; }
.vgrip { width: 3px; height: 16px; background: repeating-linear-gradient(#222 0 1px, #484848 1px 2px); }
.ref { width: 16px; height: 16px; margin: 0 5px 0 11px; }
.group { flex: none; display: grid; grid-template-rows: 14px 14px; gap: 3px; position: relative; }
.sep { border-left: 1px solid #383838; }
.row { display: flex; align-items: center; height: 14px; }
.row.wide { justify-content: space-between; }
.row label { width: 11px; color: #b4b4b4; }
.sp { width: 10px; height: 11px; background: #3a3a3a; margin-right: 2px; color: #ddd; }
.row input { width: 50px; height: 11px; padding: 0 1px; background: #9e9e9e; color: #1c1c1c; min-width: 0; line-height: 10px; }
.ic { width: 13px; height: 13px; }
.dd { width: 11px; height: 11px; background: #666; border: 1px solid #3a3a3a; color: #eee; }
.dd svg { width: 10px; height: 10px; }
.dd.flat { background: #505050; }
.xy { width: 80px; }
.xy .row, .bh .row { padding-left: 3px; }
.xy label, .bh label { width: 11px; }
.xy input, .bh input { width: 49px; }
.bh { width: 78px; }
.chain svg { width: 12px; height: 15px; }
.chain { margin: 0 5px 0 1px; }
.scale { width: 82px; padding-left: 3px; }
.scale input { width: 40px; }
.scale .ic { margin-right: 3px; }
.lock { width: 14px; height: 20px; background: #303030; margin: 0 4px 0 3px; }
.lock svg { width: 10px; height: 14px; }
.angle { width: 83px; }
.angle input { width: 39px; }
.angle .ic { width: 11px; margin-right: 3px; }
.rotate { width: 38px; padding-left: 3px; }
.bigp { width: 21px; height: 24px; margin: 0 8px 0 4px; }
.tree { width: 34px; }
.paint { width: 33px; margin-left: 11px; }
.chip { width: 13px; height: 13px; background: #d8d8d8; margin-right: 3px; }
.stroke { width: 70px; }
.stroke .row { padding-left: 2px; }
.stroke input { width: 40px; }
.line-style { width: 52px; height: 9px; background: #000; }
.effects { width: 68px; padding: 0 6px 0 6px; }
.effects .small { width: 10px; height: 10px; margin-right: 4px; }
.effects input { width: 30px; }
.wrap { width: 45px; padding: 0 7px 0 1px; }
.tog { width: 16px; height: 14px; }
.tog svg { width: 13px; height: 11px; }
.tog.on { background: #2a2a2a; }
.corners { width: 75px; padding-left: 2px; }
.corners .ic { width: 12px; margin-right: 5px; }
.corners input { width: 40px; }
.corner-style { width: 21px; height: 9px; background: #9a9a9a; border-right: 2px solid #555; margin-left: 17px; }
.fitting { width: 111px; padding: 0 7px 0 4px; }
.row .auto { display: flex; align-items: center; width: auto; gap: 4px; white-space: nowrap; }
.row .auto input { appearance: none; width: 8px; height: 8px; background: #3c3c3c; border: 1px solid #333; }
.bolt { margin-left: auto; }
.bolt svg { width: 11px; height: 14px; color: #ddd; }
.fly { margin-left: 11px; }
.fly svg { width: 12px; height: 10px; }

/* work area */
.work { flex: 1; display: flex; min-height: 0; padding: 0 2px; }
.collapse { height: 9px; background: #333; color: #aaa; font: 6px/8px "DejaVu Sans", sans-serif; padding-left: 3px; }
.grip { width: 16px; height: 3px; margin: 1px auto 3px; background: repeating-linear-gradient(90deg, #1c1c1c 0 2px, #484848 2px 3px); }
.tools { width: 45px; flex: none; background: #484848; border-right: 1px solid #333; }
.tools .collapse { margin-bottom: 3px; }
.toolset { display: grid; grid-template-columns: 20px 20px; grid-auto-rows: 17px; padding: 2px; border-bottom: 1px solid #303030; }
.tools .grip + .toolset { padding-top: 4px; }
.toolset svg { width: 15px; height: 15px; }
.toolset .on { background: #303030; border: 1px solid #222; }
.toolset .hover { background: #5a5a5a; border: 1px solid #2a2a2a; }
.toolset .hover svg { width: 18px; }
.fillstroke { width: 44px; height: 43px; border-bottom: 1px solid #333; }
.applies { display: grid; height: 17px; align-items: center; justify-items: center; padding: 0 2px; }
.two { grid-template-columns: 1fr 1fr; font: bold 10px/12px "Liberation Serif", serif; }
.three { grid-template-columns: 1fr 1fr 1fr; }
.applies .on { background: #303030; }
.applies button { width: 13px; height: 13px; }
.applies svg { width: 8px; height: 8px; }
.applies.two svg { width: 12px; height: 12px; }
.solid, .grad { width: 8px; height: 8px; background: #ddd; }
.grad { background: linear-gradient(90deg, #fff, #444); }
.modes { border-top: 1px solid #333; border-bottom: 0; padding-top: 3px; }

.document { flex: 1; min-width: 0; display: grid; grid-template: 14px 1fr 13px / 1fr 12px; position: relative; margin: 0 1px; }
.tabs { grid-column: 1 / 3; display: flex; background: #313131; }
.tab { padding: 0 7px; gap: 9px; color: #9a9a9a; font: 600 9px/12px "Open Sans", sans-serif; background: #3a3a3a; white-space: nowrap; }
.tab span { font-size: 10px; color: #ccc; }
.tab.active { background: #484848; color: #ddd; }
.sheet { display: grid; grid-template: 14px 1fr / 13px 1fr; background: #1e1e1e; min-height: 0; min-width: 0; }
.origin, .ruler-x, .ruler-y, .canvas { width: 100%; height: 100%; overflow: hidden; min-height: 0; min-width: 0; }
.ruler-x, .ruler-y { font: 8px "Noto Sans", sans-serif; fill: #ccc; }
.ruler-y { font-size: 7px; }
.ruler-x path, .ruler-y path { stroke: #999; stroke-width: 1; fill: none; }
.canvas { background: #fdfdfd; }
.guides line { stroke: #48f0dc; stroke-width: 1.4; }
.vscroll { grid-area: 2 / 2 / 4 / 3; background: #343434; display: flex; flex-direction: column; align-items: center; padding: 6px 0 16px; }
.vscroll .thumb { width: 12px; height: 135px; margin-top: 68px; background: #858585; }
.vscroll b, .hscroll b { border: 4px solid transparent; width: 0; height: 0; }
.vscroll .u { border-bottom: 5px solid #ddd; border-top: 0; }
.vscroll .d { border-top: 5px solid #ddd; border-bottom: 0; margin-top: auto; }
.status { grid-area: 3 / 1 / 4 / 3; display: flex; align-items: center; background: #3f3f3f; color: #d0d0d0; z-index: 1; font-size: 7px; }
.st-a { width: 36px; height: 12px; margin: 0 3px 0 12px; }
.nav { width: 12px; }
.nav svg { width: 7px; height: 7px; }
.page { width: 70px; justify-content: space-between; margin: 0 5px 0 4px; font-size: 8px; }
.preflight { width: 14px; height: 12px; margin: 0 6px 0 3px; }
.profile { width: 91px; justify-content: space-between; margin-right: 5px; }
.ok { width: 9px; height: 9px; border-radius: 50%; background: #55b833; margin-right: 3px; }
.errors { width: 62px; justify-content: space-between; }
.errors::after { border-width: 3px 2px 0; }
.hscroll { flex: 1; display: flex; align-items: center; height: 13px; background: #303030; padding: 0 7px 0 3px; margin-left: 4px; }
.hscroll .thumb { width: 63px; height: 11px; margin-left: 169px; background: #858585; }
.hscroll .l { border-right: 5px solid #ddd; border-left: 0; }
.hscroll .r { border-left: 5px solid #ddd; border-right: 0; margin-left: auto; }
.split { width: 24px; height: 12px; margin-left: 4px; }

.panels { width: 137px; flex: none; background: #484848; display: flex; flex-direction: column; }
.panels .collapse { text-align: right; padding-right: 3px; flex: none; }
.dock section { padding: 3px 0 2px; border-bottom: 1px solid #303030; }
.dock .grip { margin: 0 auto 2px; }
.dock section button { width: 100%; height: 22px; justify-content: flex-start; gap: 5px; padding-left: 9px; font: 600 8px/12px "Open Sans", sans-serif; color: #dcdcdc; }
.dock button svg { width: 15px; height: 14px; }

/* overlays */
.watermark { position: absolute; left: -8px; bottom: 28px; display: grid; grid-template-columns: 50px auto; color: rgba(255, 255, 255, .5); }
.watermark strong { grid-area: 1 / 2; align-self: end; font: bold 19px/20px "Open Sans", sans-serif; }
.watermark span { grid-area: 2 / 1 / 3 / 3; font: bold 9px/14px "Open Sans", sans-serif; padding: 6px 0 0 4px; }
.butterfly { grid-area: 1 / 1; width: 58px; height: 50px; }
.dots { position: absolute; left: 104px; bottom: 4px; width: 14px; height: 14px; }
.tooltip { position: absolute; left: 39px; top: 132px; padding: 1px 4px; border: 1px solid #777; background: #f6f6f6; color: #666; font: 11px/17px "Noto Sans", sans-serif; box-shadow: 2px 2px 3px rgba(0, 0, 0, .5); white-space: nowrap; }
.cursor { position: absolute; left: 41px; top: 118px; width: 10px; height: 15px; }
```
FILE: rulers.js
```js
// Rulers and guides: 5 mm are 28.34 px at 150 % zoom.
const STEP = 28.34;

const rulerX = document.getElementById('ruler-x');
const rulerY = document.getElementById('ruler-y');
const width = rulerX.getBoundingClientRect().width;
const height = rulerY.getBoundingClientRect().height;

function ticks(start, length, draw) {
  for (let i = 0; start + i * STEP < length; i++) {
    for (let k = 0; k < 10; k++) {
      draw(start + i * STEP + k * STEP / 10, k === 0 ? 14 : k % 2 ? 2 : 4);
    }
  }
}

let d = '';
let text = '';
ticks(2.5, width, (p, len) => { d += `M${Math.round(p) + .5} 14v-${len}`; });
for (let i = 0; 17 + i * STEP < width; i++) {
  text += `<text x="${Math.round(4 + i * STEP)}" y="9">${65 + i * 5}</text>`;
}
rulerX.innerHTML = `<path d="${d}"/>${text}`;

d = '';
text = '';
ticks(-1.6, height, (p, len) => { d += `M13 ${Math.round(p) + .5}h-${len}`; });
for (let i = 0; 15 + i * STEP < height; i++) {
  String(5 + i * 5).split('').forEach((c, n) => {
    text += `<text x="1" y="${Math.round(8 + i * STEP + n * 8)}">${c}</text>`;
  });
}
rulerY.innerHTML = `<path d="${d}"/>${text}`;

const xs = [103, 120, 188, 205, 273, 290, 358, 375, 443, 460, 528, 545, 613, 630, 698, 716, 783, 800, 868];
const ys = [167, 184, 289, 305, 409, 426, 530, 546];
document.getElementById('guides').innerHTML =
  xs.map(x => `<line x1="${x + .5}" x2="${x + .5}" y1="94" y2="2000"/>`).join('') +
  ys.map(y => `<line x1="61" x2="4000" y1="${y + .5}" y2="${y + .5}"/>`).join('');
```
